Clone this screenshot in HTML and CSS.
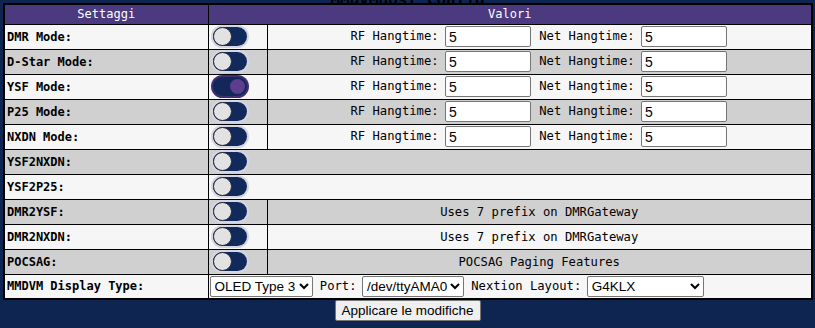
FILE: index.html
```html
<!DOCTYPE html>
<html lang="it">
<head>
	<meta charset="UTF-8">
	<title>MMDVMHost Config</title>
<link rel="stylesheet" href="styles.css">
</head>
<body>
	<div class="title">MMDVMHost Config</div>
	<table class="cfg">
		<colgroup>
			<col class="k1">
			<col class="k2">
			<col>
		</colgroup>
		<tr>
			<th>Settaggi</th>
			<th colspan="2">Valori</th>
		</tr>
		<tr>
			<td class="lbl">DMR Mode:</td>
			<td class="sw"><span class="switch"><span class="knob"></span></span></td>
			<td class="val">RF Hangtime: <input type="text" value="5"> Net Hangtime: <input type="text" value="5"></td>
		</tr>
		<tr class="alt">
			<td class="lbl">D-Star Mode:</td>
			<td class="sw"><span class="switch"><span class="knob"></span></span></td>
			<td class="val">RF Hangtime: <input type="text" value="5"> Net Hangtime: <input type="text" value="5"></td>
		</tr>
		<tr>
			<td class="lbl">YSF Mode:</td>
			<td class="sw"><span class="switch on"><span class="knob"></span></span></td>
			<td class="val">RF Hangtime: <input type="text" value="5"> Net Hangtime: <input type="text" value="5"></td>
		</tr>
		<tr class="alt">
			<td class="lbl">P25 Mode:</td>
			<td class="sw"><span class="switch"><span class="knob"></span></span></td>
			<td class="val">RF Hangtime: <input type="text" value="5"> Net Hangtime: <input type="text" value="5"></td>
		</tr>
		<tr>
			<td class="lbl">NXDN Mode:</td>
			<td class="sw"><span class="switch"><span class="knob"></span></span></td>
			<td class="val">RF Hangtime: <input type="text" value="5"> Net Hangtime: <input type="text" value="5"></td>
		</tr>
		<tr class="alt">
			<td class="lbl">YSF2NXDN:</td>
			<td class="sw" colspan="2"><span class="switch"><span class="knob"></span></span></td>
		</tr>
		<tr>
			<td class="lbl">YSF2P25:</td>
			<td class="sw" colspan="2"><span class="switch"><span class="knob"></span></span></td>
		</tr>
		<tr class="alt">
			<td class="lbl">DMR2YSF:</td>
			<td class="sw"><span class="switch"><span class="knob"></span></span></td>
			<td class="val">Uses 7 prefix on DMRGateway</td>
		</tr>
		<tr>
			<td class="lbl">DMR2NXDN:</td>
			<td class="sw"><span class="switch"><span class="knob"></span></span></td>
			<td class="val">Uses 7 prefix on DMRGateway</td>
		</tr>
		<tr class="alt">
			<td class="lbl">POCSAG:</td>
			<td class="sw"><span class="switch"><span class="knob"></span></span></td>
			<td class="val">POCSAG Paging Features</td>
		</tr>
		<tr>
			<td class="lbl">MMDVM Display Type:</td>
			<td class="disp" colspan="2">
				<select class="s1"><option>OLED Type 3</option></select>
				Port: <select class="s2"><option>/dev/ttyAMA0</option></select>
				Nextion Layout: <select class="s3"><option>G4KLX</option></select>
			</td>
		</tr>
	</table>
	<div class="actions"><input type="button" value="Applicare le modifiche"></div>
</body>
</html>
```

FILE: styles.css
```css
*{ box-sizing: border-box;}
body{ margin: 0; background: #0e2551; font-family: "DejaVu Sans Mono", monospace; font-size: 12px; color: #000;}
.title{ height: 3px; overflow: hidden; text-align: center; font-weight: bold; font-size: 16px; color: #000; line-height: 0;}
.cfg{ width: 810px; margin: 0 0 0 3px; border-collapse: collapse; border: 2px solid #000; table-layout: fixed;}
.cfg col.k1{ width: 204px;}
.cfg col.k2{ width: 59px;}
.cfg th{ background: #4b3a80; color: #fff; font-weight: normal; height: 20px; padding: 0; text-align: center; border: 1px solid #000; border-left-color: #9a90b8;}
.cfg th:first-child{ border-left-color: #000;}
.cfg td{ height: 25px; padding: 0 2px; border: 1px solid #000; background: #f6f6f6; white-space: nowrap;}
.cfg tr.alt td{ background: #d0d0d0;}
.cfg td.sw{ padding: 0 2px;}
.cfg td.lbl{ font-weight: bold; padding-left: 2px;}
.cfg td.val{ text-align: center; font-size: 12.2px;}
.cfg td.disp{ padding: 0 1px; font-size: 12.2px;}
.switch{ display: block; position: relative; width: 34px; height: 19px; border-radius: 10px; background: #12295c; box-shadow: 0 0 0 2px #d4d7e3; margin-left: 2px;}
.knob{ position: absolute; left: 0; top: 0; width: 19px; height: 19px; border-radius: 50%; background: #e2e2e2; border: 1px solid #2b2b3a;}
.switch.on{ background: #14275b; box-shadow: 0 0 0 2px #3f2f76;}
.switch.on .knob{ left: auto; right: 2px; top: 2px; width: 15px; height: 15px; background: #5c3d8e; border: none;}
input[type=text]{ width: 86px; height: 21px; margin: 0 1px 0 -1px; padding: 1px 3px; font-family: "Liberation Sans", Arial, sans-serif; font-size: 14px; border: 1px solid #767676; border-radius: 2px; background: #fff; vertical-align: middle;}
select{ height: 21px; font-family: "Liberation Sans", Arial, sans-serif; font-size: 13.5px; border: 1px solid #767676; border-radius: 2px; background: #fff; vertical-align: middle; padding: 0;}
.s1{ width: 103px;}
.s2{ width: 102px; margin-left: -2px;}
.s3{ width: 117px; margin-left: -2px;}
.actions{ text-align: center;}
.actions input{ font-family: "Liberation Sans", Arial, sans-serif; font-size: 13.5px; height: 21px; width: 146px; padding: 0 4px; background: #efefef; border: 1px solid #767676; border-radius: 2px;}
```
